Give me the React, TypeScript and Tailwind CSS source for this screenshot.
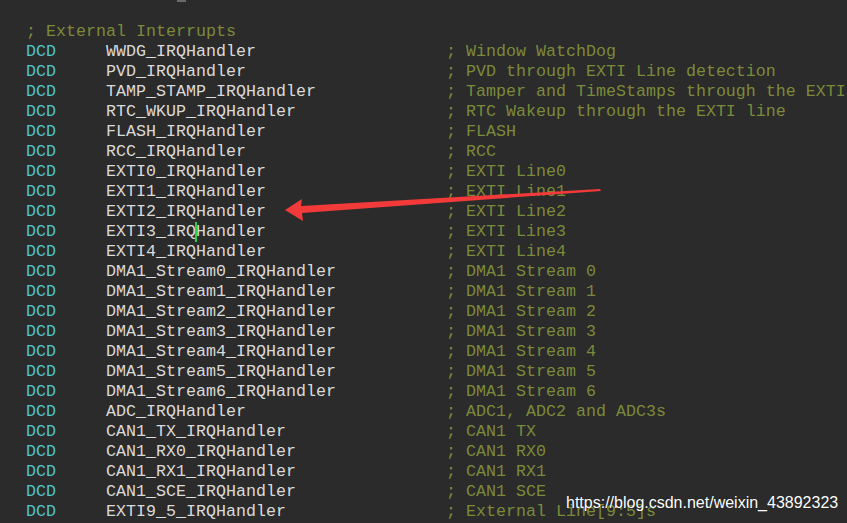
import React from 'react';

const rows: [string, string][] = [
  ['WWDG_IRQHandler', '; Window WatchDog'],
  ['PVD_IRQHandler', '; PVD through EXTI Line detection'],
  ['TAMP_STAMP_IRQHandler', '; Tamper and TimeStamps through the EXTI line'],
  ['RTC_WKUP_IRQHandler', '; RTC Wakeup through the EXTI line'],
  ['FLASH_IRQHandler', '; FLASH'],
  ['RCC_IRQHandler', '; RCC'],
  ['EXTI0_IRQHandler', '; EXTI Line0'],
  ['EXTI1_IRQHandler', '; EXTI Line1'],
  ['EXTI2_IRQHandler', '; EXTI Line2'],
  ['EXTI3_IRQHandler', '; EXTI Line3'],
  ['EXTI4_IRQHandler', '; EXTI Line4'],
  ['DMA1_Stream0_IRQHandler', '; DMA1 Stream 0'],
  ['DMA1_Stream1_IRQHandler', '; DMA1 Stream 1'],
  ['DMA1_Stream2_IRQHandler', '; DMA1 Stream 2'],
  ['DMA1_Stream3_IRQHandler', '; DMA1 Stream 3'],
  ['DMA1_Stream4_IRQHandler', '; DMA1 Stream 4'],
  ['DMA1_Stream5_IRQHandler', '; DMA1 Stream 5'],
  ['DMA1_Stream6_IRQHandler', '; DMA1 Stream 6'],
  ['ADC_IRQHandler', '; ADC1, ADC2 and ADC3s'],
  ['CAN1_TX_IRQHandler', '; CAN1 TX'],
  ['CAN1_RX0_IRQHandler', '; CAN1 RX0'],
  ['CAN1_RX1_IRQHandler', '; CAN1 RX1'],
  ['CAN1_SCE_IRQHandler', '; CAN1 SCE'],
  ['EXTI9_5_IRQHandler', '; External Line[9:5]s'],
];

const App = () => {
  return (
    <div
      className="relative w-[847px] h-[523px] overflow-hidden bg-[#2b2b2b] pl-[26px] pt-[22px] text-[16.67px] leading-[20px] whitespace-pre"
      style={{ fontFamily: '"Liberation Mono", "Courier New", monospace' }}
    >
      <div className="absolute left-[177px] top-0 w-[9px] h-[2px] bg-[#6b6b6b]" />

      <div className="text-[#7b8a3a]">; External Interrupts</div>
      {rows.map(([name, comment], i) => (
        <div key={name} className="flex">
          <span className="w-[80px] shrink-0 text-[#4fc3cc]">DCD</span>
          <span className="relative w-[340px] shrink-0 text-[#dadada]">
            {name}
            {i === 9 && <span className="absolute left-[89px] top-0 w-[2px] h-[20px] bg-[#22d04a]" />}
          </span>
          <span className="text-[#7b8a3a]">{comment}</span>
        </div>
      ))}

      {/* red annotation arrow */}
      <svg className="absolute left-0 top-0" width="847" height="523" viewBox="0 0 847 523">
        <polygon points="285,210 302,199 301,206 600,189 601,191 302,213 303,221" fill="#f23a3a" />
      </svg>

      <div
        className="absolute left-[566px] top-[493px] text-[16px] leading-[20px] text-white"
        style={{ fontFamily: '"Liberation Sans", Arial, sans-serif', textShadow: '0 0 1px rgba(0,0,0,0.5)' }}
      >
        https://blog.csdn.net/weixin_43892323
      </div>
    </div>
  );
};

export default App;
